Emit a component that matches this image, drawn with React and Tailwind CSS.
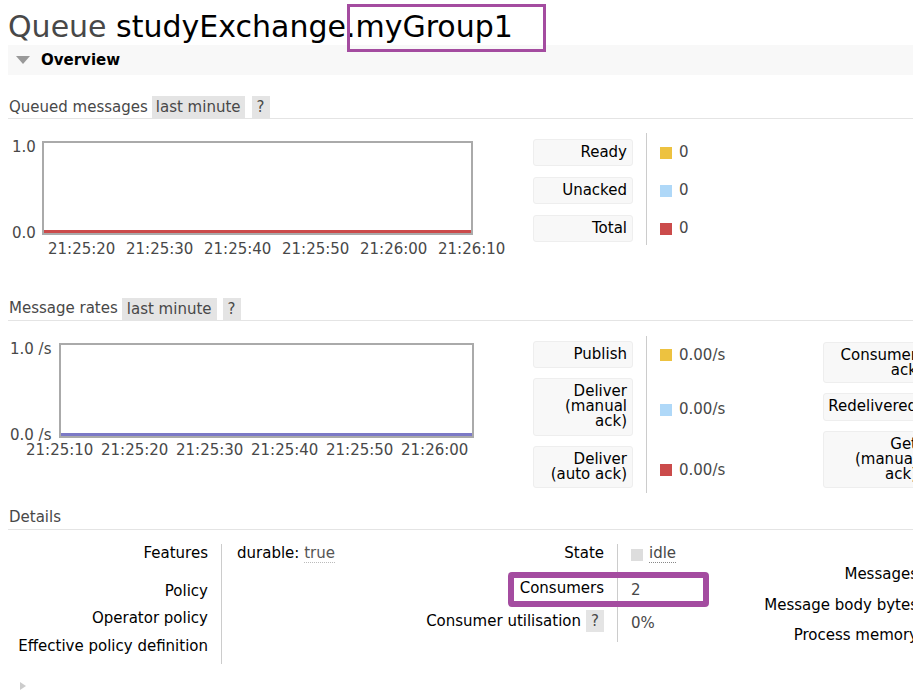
export default function App() {
  const legend1 = [
    { label: "Ready", color: "bg-[#edc240]", value: "0" },
    { label: "Unacked", color: "bg-[#afd8f8]", value: "0" },
    { label: "Total", color: "bg-[#cb4b4b]", value: "0" },
  ];
  const times1 = ["21:25:20", "21:25:30", "21:25:40", "21:25:50", "21:26:00", "21:26:10"];
  const times2 = ["21:25:10", "21:25:20", "21:25:30", "21:25:40", "21:25:50", "21:26:00"];

  return (
    <div className="w-[913px] h-[690px] overflow-hidden bg-white font-['DejaVu_Sans',sans-serif] text-[14px] text-[#484848]">
      <div className="w-[1100px] pl-2">
        {/* Title */}
        <h1 className="pt-[9px] h-[45px] text-[30px] leading-[36px] text-[#484848] whitespace-nowrap">
          Queue{" "}
          <span className="text-black">
            studyExchange.
            <span className="relative">
              myGroup1
              <span className="absolute left-[-8px] right-[-33px] top-[-5px] bottom-[-8px] border-[3px] border-[#a44ca0]"></span>
            </span>
          </span>
        </h1>

        {/* Overview bar */}
        <div className="h-[30px] bg-[#f8f8f8] flex items-center gap-[11px] pl-2">
          <svg width="14" height="8" viewBox="0 0 14 8">
            <path d="M0 0 L14 0 L7 8 Z" fill="#999" />
          </svg>
          <span className="font-bold text-[15px] text-black">Overview</span>
        </div>

        {/* Queued messages */}
        <div className="mt-[21px] border-b border-[#e4e4e4] flex items-center h-[23px]">
          <span className="pl-[1px] text-[15px] mr-[4px]">Queued messages</span>
          <span className="bg-[#e4e4e4] px-[4px] h-[22px] leading-[22px] text-[15px] mr-[7px]">last minute</span>
          <span className="bg-[#e4e4e4] px-[5px] h-[22px] leading-[22px] text-[15px]">?</span>
        </div>

        <div className="flex mt-[22px]">
          {/* chart 1 */}
          <div className="w-[525px]">
            <div className="flex">
              <div className="w-[34px] h-[97px] flex flex-col justify-between text-[15px] leading-[15px] pl-[4px]">
                <span className="-mt-[1px]">1.0</span>
                <span className="-mb-[3px]">0.0</span>
              </div>
              <div className="w-[431px] h-[94px] border-2 border-[#aaa] flex flex-col justify-end">
                <div className="h-[3px] bg-[#cb4b4b]"></div>
              </div>
            </div>
            <div className="flex pl-[40px] text-[15px]">
              {times1.map((t) => (
                <span key={t} className="w-[78px]">{t}</span>
              ))}
            </div>
          </div>
          {/* legend 1 */}
          <div className="flex -mt-[8px]">
            <div className="flex flex-col gap-[11px] pt-[6px] pr-[13px] border-r border-[#ccc] h-[112px]">
              {legend1.map((r) => (
                <div key={r.label} className="w-[100px] h-[27px] bg-[#f8f8f8] border border-[#eee] rounded-[3px] text-right pr-[5px] text-black text-[15px] leading-[25px]">
                  {r.label}
                </div>
              ))}
            </div>
            <div className="flex flex-col gap-[11px] pt-[6px] pl-[13px]">
              {legend1.map((r) => (
                <div key={r.label} className="h-[27px] flex items-center gap-[7px] text-[15px]">
                  <span className={`w-[12px] h-[12px] ${r.color}`}></span>
                  <span>{r.value}</span>
                </div>
              ))}
            </div>
          </div>
        </div>

        {/* Message rates */}
        <div className="mt-[37px] border-b border-[#e4e4e4] flex items-center h-[23px]">
          <span className="pl-[1px] text-[15px] mr-[4px]">Message rates</span>
          <span className="bg-[#e4e4e4] px-[5px] h-[22px] leading-[22px] text-[15px] mr-[6px]">last minute</span>
          <span className="bg-[#e4e4e4] px-[5px] h-[22px] leading-[22px] text-[15px]">?</span>
        </div>

        <div className="flex mt-[22px]">
          {/* chart 2 */}
          <div className="w-[525px]">
            <div className="flex">
              <div className="w-[51px] h-[97px] flex flex-col justify-between text-[15px] leading-[15px] pl-[2px]">
                <span className="-mt-[1px]">1.0 /s</span>
                <span className="-mb-[3px]">0.0 /s</span>
              </div>
              <div className="w-[415px] h-[95px] border-2 border-[#aaa] flex flex-col justify-end">
                <div className="h-[3px] bg-[#7c79c6]"></div>
              </div>
            </div>
            <div className="flex pl-[18px] -mt-[1px] text-[15px]">
              {times2.map((t) => (
                <span key={t} className="w-[75px]">{t}</span>
              ))}
            </div>
          </div>
          {/* legend 2 */}
          <div className="flex -mt-[7px]">
            <div className="flex flex-col pt-[5px] pr-[13px] border-r border-[#ccc] h-[157px]">
              <div className="w-[100px] h-[27px] bg-[#f8f8f8] border border-[#eee] rounded-[3px] text-right pr-[5px] text-black text-[15px] leading-[25px]">Publish</div>
              <div className="mt-[10px] w-[100px] h-[58px] bg-[#f8f8f8] border border-[#eee] rounded-[3px] text-right pr-[5px] text-black text-[15px] leading-[15px] pt-[5px]">Deliver<br />(manual<br />ack)</div>
              <div className="mt-[10px] w-[100px] h-[42px] bg-[#f8f8f8] border border-[#eee] rounded-[3px] text-right pr-[5px] text-black text-[15px] leading-[15px] pt-[5px]">Deliver<br />(auto ack)</div>
            </div>
            <div className="flex flex-col pl-[13px] w-[176px] text-[15px]">
              <div className="h-[38px] flex items-center gap-[7px] pt-[1px]">
                <span className="w-[12px] h-[12px] bg-[#edc240]"></span>0.00/s
              </div>
              <div className="h-[69px] flex items-center gap-[7px] pt-[3px]">
                <span className="w-[12px] h-[12px] bg-[#afd8f8]"></span>0.00/s
              </div>
              <div className="h-[50px] flex items-center gap-[7px] pt-[5px]">
                <span className="w-[12px] h-[12px] bg-[#cb4b4b]"></span>0.00/s
              </div>
            </div>
            <div className="flex flex-col pt-[6px]">
              <div className="w-[100px] h-[41px] bg-[#f8f8f8] border border-[#eee] rounded-[3px] text-right pr-[5px] text-black text-[15px] leading-[15px] pt-[5px] whitespace-nowrap">Consumer<br />ack</div>
              <div className="mt-[10px] w-[100px] h-[28px] bg-[#f8f8f8] border border-[#eee] rounded-[3px] text-right pr-[5px] text-black text-[15px] leading-[25px] whitespace-nowrap">Redelivered</div>
              <div className="mt-[10px] w-[100px] h-[57px] bg-[#f8f8f8] border border-[#eee] rounded-[3px] text-right pr-[5px] text-black text-[15px] leading-[15px] pt-[5px] whitespace-nowrap">Get<br />(manual<br />ack)</div>
            </div>
          </div>
        </div>

        {/* Details */}
        <div className="mt-[15px] border-b border-[#e4e4e4] h-[22px] leading-[18px] text-[15px] pl-[1px]">Details</div>

        <div className="flex mt-[14px] text-black text-[15px]">
          {/* column 1 */}
          <div className="flex">
            <div className="w-[214px] pr-[13px] border-r border-[#ccc] h-[120px] text-right">
              <div className="h-[18px] leading-[18px]">Features</div>
              <div className="mt-[20px] leading-[18px]">Policy</div>
              <div className="mt-[9px] leading-[18px]">Operator policy</div>
              <div className="mt-[10px] leading-[18px]">Effective policy definition</div>
            </div>
            <div className="pl-[15px] w-[180px] leading-[18px]">
              durable: <span className="text-[#555] border-b border-dotted border-[#bbb]">true</span>
            </div>
          </div>
          {/* column 2 */}
          <div className="flex flex-col">
            <div className="flex h-[35px]">
              <div className="w-[216px] border-r border-[#ccc] text-right pr-[13px] leading-[18px]">State</div>
              <div className="w-[102px] pl-[13px] h-[18px] flex items-center gap-[6px]">
                <span className="w-[12px] h-[12px] bg-[#ddd] mt-[4px]"></span>
                <span className="text-[#484848] border-b border-dotted border-[#888] leading-[17px] mt-[3px]">idle</span>
              </div>
            </div>
            <div className="flex h-[31px] relative">
              <div className="w-[216px] border-r border-[#ccc] text-right pr-[13px] leading-[18px]">Consumers</div>
              <div className="w-[102px] pl-[13px] leading-[18px] pt-[2px] text-[#484848]">2</div>
              <div className="absolute left-[106px] top-[-7px] w-[201px] h-[35px] border-[6px] border-[#a44ca0] rounded-[4px]"></div>
            </div>
            <div className="flex h-[32px]">
              <div className="w-[216px] border-r border-[#ccc] pr-[13px] flex justify-end items-start gap-[5px] leading-[22px] whitespace-nowrap">
                Consumer utilisation
                <span className="bg-[#e4e4e4] px-[5px] h-[22px] text-[#484848]">?</span>
              </div>
              <div className="w-[102px] pl-[13px] leading-[18px] pt-[4px] text-[#484848]">0%</div>
            </div>
          </div>
          {/* column 3 */}
          <div className="w-[198px] text-right pt-[21px] whitespace-nowrap">
            <div className="leading-[18px]">Messages</div>
            <div className="mt-[13px] leading-[18px]">Message body bytes</div>
            <div className="mt-[12px] leading-[18px]">Process memory</div>
          </div>
        </div>

        <div className="mt-[18px] pl-[12px]">
          <svg width="8" height="8" viewBox="0 0 8 8">
            <path d="M0 0 L6 4 L0 8 Z" fill="#ccc" />
          </svg>
        </div>
      </div>
    </div>
  );
}
